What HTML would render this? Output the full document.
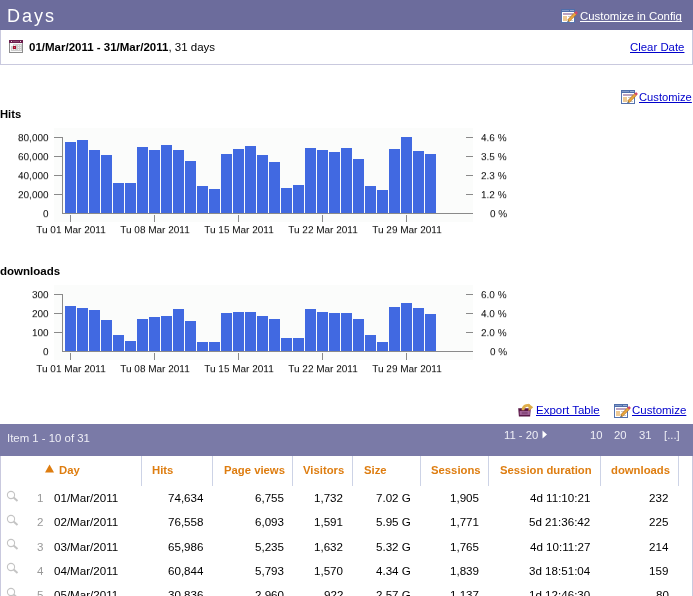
<!DOCTYPE html>
<html><head><meta charset="utf-8"><style>
html,body{margin:0;padding:0;background:#fff;}
body{width:693px;height:596px;overflow:hidden;position:relative;font-family:"Liberation Sans", sans-serif;}
.t{position:absolute;white-space:nowrap;text-decoration-skip-ink:none;-webkit-font-smoothing:antialiased;will-change:transform;}
.cl{color:#000;transform:scaleY(0.88);transform-origin:0 9.465px;}
</style></head><body>
<div style="position:absolute;left:0;top:0;width:693px;height:30px;background:#6c6c9c"></div>
<div class="t " style="left:7px;top:6.76px;font-size:18px;line-height:18px;letter-spacing:2px;color:#fff">Days</div>
<svg width="17" height="15" viewBox="0 0 17 15" style="position:absolute;left:561px;top:9px">
<rect x="0.5" y="0.5" width="13" height="13" fill="#fff" stroke="#5473ae" stroke-width="1"/>
<rect x="0" y="0" width="14" height="3" fill="#4f6eab"/>
<rect x="1" y="1" width="7" height="1" fill="#7f97c6"/>
<rect x="9.5" y="1" width="1" height="1" fill="#e8eef8"/><rect x="11.5" y="1" width="1" height="1" fill="#e8eef8"/>
<rect x="2" y="4" width="10" height="2" fill="#bba3c1"/>
<rect x="2" y="7" width="4" height="5" fill="#edc994"/>
<rect x="7" y="7" width="3" height="1" fill="#c8c8c8"/><rect x="9" y="11" width="3" height="1" fill="#c8c8c8"/>
<path d="M7.4 11.8 L14.6 4.4" stroke="#b9782a" stroke-width="3"/>
<path d="M7.4 11.8 L14.6 4.4" stroke="#eaa940" stroke-width="1.8"/>
<path d="M14.3 4.7 L16 3" stroke="#d4456a" stroke-width="2.6"/>
<path d="M6.2 13.2 L7 11.2 L8.2 12.3 Z" fill="#2a2a2a"/>
</svg>
<div class="t " style="left:579.5px;top:10.85px;font-size:11.4px;line-height:11.4px;color:#fff;text-decoration:underline">Customize in Config</div>
<div style="position:absolute;left:0;top:30px;width:691px;height:34px;border:1px solid #c9c9de;border-top:0"></div>
<svg width="15" height="14" style="position:absolute;left:9px;top:40px">
<rect x="0.5" y="0.5" width="13" height="12" fill="#fafafa" stroke="#8c8c8c"/>
<rect x="0" y="0" width="14" height="3" fill="#6d1f4f"/>
<rect x="4" y="1" width="6" height="1" fill="#8a4a70"/>
<rect x="2" y="1" width="1" height="1" fill="#eadbe3"/><rect x="11" y="1" width="1" height="1" fill="#eadbe3"/>
<rect x="4" y="4" width="9" height="7" fill="#cdcdcd"/><rect x="2" y="6" width="2" height="5" fill="#cdcdcd"/>
<rect x="5" y="5" width="1" height="1" fill="#f0f0f0"/><rect x="9" y="5" width="1" height="1" fill="#f0f0f0"/><rect x="11" y="5" width="1" height="1" fill="#f0f0f0"/>
<rect x="9" y="7" width="1" height="1" fill="#f0f0f0"/><rect x="11" y="7" width="1" height="1" fill="#f0f0f0"/>
<rect x="3" y="9" width="1" height="1" fill="#f0f0f0"/><rect x="5" y="9" width="1" height="1" fill="#f0f0f0"/><rect x="9" y="9" width="1" height="1" fill="#f0f0f0"/><rect x="11" y="9" width="1" height="1" fill="#f0f0f0"/>
<rect x="4" y="6" width="3" height="3" fill="#a5102e"/><rect x="5" y="7" width="1" height="1" fill="#d0607a"/>
</svg>
<div class="t " style="left:29px;top:41.97px;font-size:11.5px;line-height:11.5px;color:#000"><b>01/Mar/2011 - 31/Mar/2011</b>, 31 days</div>
<div class="t " style="left:630px;top:42.15px;font-size:11.4px;line-height:11.4px;color:#0000cc;text-decoration:underline">Clear Date</div>
<svg width="17" height="15" viewBox="0 0 17 15" style="position:absolute;left:621px;top:90px">
<rect x="0.5" y="0.5" width="13" height="13" fill="#fff" stroke="#5473ae" stroke-width="1"/>
<rect x="0" y="0" width="14" height="3" fill="#4f6eab"/>
<rect x="1" y="1" width="7" height="1" fill="#7f97c6"/>
<rect x="9.5" y="1" width="1" height="1" fill="#e8eef8"/><rect x="11.5" y="1" width="1" height="1" fill="#e8eef8"/>
<rect x="2" y="4" width="10" height="2" fill="#bba3c1"/>
<rect x="2" y="7" width="4" height="5" fill="#edc994"/>
<rect x="7" y="7" width="3" height="1" fill="#c8c8c8"/><rect x="9" y="11" width="3" height="1" fill="#c8c8c8"/>
<path d="M7.4 11.8 L14.6 4.4" stroke="#b9782a" stroke-width="3"/>
<path d="M7.4 11.8 L14.6 4.4" stroke="#eaa940" stroke-width="1.8"/>
<path d="M14.3 4.7 L16 3" stroke="#d4456a" stroke-width="2.6"/>
<path d="M6.2 13.2 L7 11.2 L8.2 12.3 Z" fill="#2a2a2a"/>
</svg>
<div class="t " style="left:638.7px;top:91.52px;font-size:11.2px;line-height:11.2px;color:#0000cc;text-decoration:underline">Customize</div>
<div class="t " style="left:0px;top:109.22px;font-size:11.2px;line-height:11.2px;color:#000"><b>Hits</b></div>
<div style="position:absolute;left:54px;top:128px;width:419px;height:94px;background:#fbfcfb"></div>
<svg width="693" height="242" style="position:absolute;left:0;top:0"><rect x="65" y="142" width="11" height="71" fill="#4169e1"/><rect x="77" y="140" width="11" height="73" fill="#4169e1"/><rect x="89" y="150" width="11" height="63" fill="#4169e1"/><rect x="101" y="155" width="11" height="58" fill="#4169e1"/><rect x="113" y="183" width="11" height="30" fill="#4169e1"/><rect x="125" y="183" width="11" height="30" fill="#4169e1"/><rect x="137" y="147" width="11" height="66" fill="#4169e1"/><rect x="149" y="150" width="11" height="63" fill="#4169e1"/><rect x="161" y="145" width="11" height="68" fill="#4169e1"/><rect x="173" y="150" width="11" height="63" fill="#4169e1"/><rect x="185" y="161" width="11" height="52" fill="#4169e1"/><rect x="197" y="186" width="11" height="27" fill="#4169e1"/><rect x="209" y="189" width="11" height="24" fill="#4169e1"/><rect x="221" y="154" width="11" height="59" fill="#4169e1"/><rect x="233" y="149" width="11" height="64" fill="#4169e1"/><rect x="245" y="146" width="11" height="67" fill="#4169e1"/><rect x="257" y="155" width="11" height="58" fill="#4169e1"/><rect x="269" y="162" width="11" height="51" fill="#4169e1"/><rect x="281" y="188" width="11" height="25" fill="#4169e1"/><rect x="293" y="185" width="11" height="28" fill="#4169e1"/><rect x="305" y="148" width="11" height="65" fill="#4169e1"/><rect x="317" y="150" width="11" height="63" fill="#4169e1"/><rect x="329" y="152" width="11" height="61" fill="#4169e1"/><rect x="341" y="148" width="11" height="65" fill="#4169e1"/><rect x="353" y="159" width="11" height="54" fill="#4169e1"/><rect x="365" y="186" width="11" height="27" fill="#4169e1"/><rect x="377" y="190" width="11" height="23" fill="#4169e1"/><rect x="389" y="149" width="11" height="64" fill="#4169e1"/><rect x="401" y="137" width="11" height="76" fill="#4169e1"/><rect x="413" y="151" width="11" height="62" fill="#4169e1"/><rect x="425" y="154" width="11" height="59" fill="#4169e1"/><rect x="62" y="137" width="1" height="77" fill="#8a8a8a"/><rect x="62" y="213" width="411" height="1" fill="#8a8a8a"/><rect x="54" y="137" width="8" height="1" fill="#8a8a8a"/><rect x="466" y="137" width="7" height="1" fill="#8a8a8a"/><rect x="54" y="156" width="8" height="1" fill="#8a8a8a"/><rect x="466" y="156" width="7" height="1" fill="#8a8a8a"/><rect x="54" y="175" width="8" height="1" fill="#8a8a8a"/><rect x="466" y="175" width="7" height="1" fill="#8a8a8a"/><rect x="54" y="194" width="8" height="1" fill="#8a8a8a"/><rect x="466" y="194" width="7" height="1" fill="#8a8a8a"/><rect x="70" y="215" width="1" height="7" fill="#8a8a8a"/><rect x="154" y="215" width="1" height="7" fill="#8a8a8a"/><rect x="238" y="215" width="1" height="7" fill="#8a8a8a"/><rect x="322" y="215" width="1" height="7" fill="#8a8a8a"/><rect x="406" y="215" width="1" height="7" fill="#8a8a8a"/></svg>
<div class="t cl" style="right:644px;top:133.03px;font-size:10px;line-height:10px;text-align:right;">80,000</div>
<div class="t cl" style="right:644px;top:152.03px;font-size:10px;line-height:10px;text-align:right;">60,000</div>
<div class="t cl" style="right:644px;top:171.03px;font-size:10px;line-height:10px;text-align:right;">40,000</div>
<div class="t cl" style="right:644px;top:190.03px;font-size:10px;line-height:10px;text-align:right;">20,000</div>
<div class="t cl" style="right:644px;top:209.03px;font-size:10px;line-height:10px;text-align:right;">0</div>
<div class="t cl" style="right:186px;top:133.03px;font-size:10px;line-height:10px;text-align:right;">4.6 %</div>
<div class="t cl" style="right:186px;top:152.03px;font-size:10px;line-height:10px;text-align:right;">3.5 %</div>
<div class="t cl" style="right:186px;top:171.03px;font-size:10px;line-height:10px;text-align:right;">2.3 %</div>
<div class="t cl" style="right:186px;top:190.03px;font-size:10px;line-height:10px;text-align:right;">1.2 %</div>
<div class="t cl" style="right:186px;top:209.03px;font-size:10px;line-height:10px;text-align:right;">0 %</div>
<div class="t cl" style="left:-29.5px;width:200px;top:225.03px;font-size:10px;line-height:10px;text-align:center;">Tu 01 Mar 2011</div>
<div class="t cl" style="left:54.5px;width:200px;top:225.03px;font-size:10px;line-height:10px;text-align:center;">Tu 08 Mar 2011</div>
<div class="t cl" style="left:138.5px;width:200px;top:225.03px;font-size:10px;line-height:10px;text-align:center;">Tu 15 Mar 2011</div>
<div class="t cl" style="left:222.5px;width:200px;top:225.03px;font-size:10px;line-height:10px;text-align:center;">Tu 22 Mar 2011</div>
<div class="t cl" style="left:306.5px;width:200px;top:225.03px;font-size:10px;line-height:10px;text-align:center;">Tu 29 Mar 2011</div>
<div class="t " style="left:0px;top:265.77px;font-size:11.5px;line-height:11.5px;color:#000"><b>downloads</b></div>
<div style="position:absolute;left:54px;top:285px;width:419px;height:75px;background:#fbfcfb"></div>
<svg width="693" height="380" style="position:absolute;left:0;top:0"><rect x="65" y="306" width="11" height="45" fill="#4169e1"/><rect x="77" y="308" width="11" height="43" fill="#4169e1"/><rect x="89" y="310" width="11" height="41" fill="#4169e1"/><rect x="101" y="320" width="11" height="31" fill="#4169e1"/><rect x="113" y="335" width="11" height="16" fill="#4169e1"/><rect x="125" y="341" width="11" height="10" fill="#4169e1"/><rect x="137" y="319" width="11" height="32" fill="#4169e1"/><rect x="149" y="317" width="11" height="34" fill="#4169e1"/><rect x="161" y="316" width="11" height="35" fill="#4169e1"/><rect x="173" y="309" width="11" height="42" fill="#4169e1"/><rect x="185" y="321" width="11" height="30" fill="#4169e1"/><rect x="197" y="342" width="11" height="9" fill="#4169e1"/><rect x="209" y="342" width="11" height="9" fill="#4169e1"/><rect x="221" y="313" width="11" height="38" fill="#4169e1"/><rect x="233" y="312" width="11" height="39" fill="#4169e1"/><rect x="245" y="312" width="11" height="39" fill="#4169e1"/><rect x="257" y="316" width="11" height="35" fill="#4169e1"/><rect x="269" y="319" width="11" height="32" fill="#4169e1"/><rect x="281" y="338" width="11" height="13" fill="#4169e1"/><rect x="293" y="338" width="11" height="13" fill="#4169e1"/><rect x="305" y="309" width="11" height="42" fill="#4169e1"/><rect x="317" y="312" width="11" height="39" fill="#4169e1"/><rect x="329" y="313" width="11" height="38" fill="#4169e1"/><rect x="341" y="313" width="11" height="38" fill="#4169e1"/><rect x="353" y="319" width="11" height="32" fill="#4169e1"/><rect x="365" y="335" width="11" height="16" fill="#4169e1"/><rect x="377" y="342" width="11" height="9" fill="#4169e1"/><rect x="389" y="307" width="11" height="44" fill="#4169e1"/><rect x="401" y="303" width="11" height="48" fill="#4169e1"/><rect x="413" y="308" width="11" height="43" fill="#4169e1"/><rect x="425" y="314" width="11" height="37" fill="#4169e1"/><rect x="62" y="294" width="1" height="58" fill="#8a8a8a"/><rect x="62" y="351" width="411" height="1" fill="#8a8a8a"/><rect x="54" y="294" width="8" height="1" fill="#8a8a8a"/><rect x="466" y="294" width="7" height="1" fill="#8a8a8a"/><rect x="54" y="313" width="8" height="1" fill="#8a8a8a"/><rect x="466" y="313" width="7" height="1" fill="#8a8a8a"/><rect x="54" y="332" width="8" height="1" fill="#8a8a8a"/><rect x="466" y="332" width="7" height="1" fill="#8a8a8a"/><rect x="70" y="353" width="1" height="7" fill="#8a8a8a"/><rect x="154" y="353" width="1" height="7" fill="#8a8a8a"/><rect x="238" y="353" width="1" height="7" fill="#8a8a8a"/><rect x="322" y="353" width="1" height="7" fill="#8a8a8a"/><rect x="406" y="353" width="1" height="7" fill="#8a8a8a"/></svg>
<div class="t cl" style="right:644px;top:290.04px;font-size:10px;line-height:10px;text-align:right;">300</div>
<div class="t cl" style="right:644px;top:309.04px;font-size:10px;line-height:10px;text-align:right;">200</div>
<div class="t cl" style="right:644px;top:328.04px;font-size:10px;line-height:10px;text-align:right;">100</div>
<div class="t cl" style="right:644px;top:347.04px;font-size:10px;line-height:10px;text-align:right;">0</div>
<div class="t cl" style="right:186px;top:290.04px;font-size:10px;line-height:10px;text-align:right;">6.0 %</div>
<div class="t cl" style="right:186px;top:309.04px;font-size:10px;line-height:10px;text-align:right;">4.0 %</div>
<div class="t cl" style="right:186px;top:328.04px;font-size:10px;line-height:10px;text-align:right;">2.0 %</div>
<div class="t cl" style="right:186px;top:347.04px;font-size:10px;line-height:10px;text-align:right;">0 %</div>
<div class="t cl" style="left:-29.5px;width:200px;top:364.34px;font-size:10px;line-height:10px;text-align:center;">Tu 01 Mar 2011</div>
<div class="t cl" style="left:54.5px;width:200px;top:364.34px;font-size:10px;line-height:10px;text-align:center;">Tu 08 Mar 2011</div>
<div class="t cl" style="left:138.5px;width:200px;top:364.34px;font-size:10px;line-height:10px;text-align:center;">Tu 15 Mar 2011</div>
<div class="t cl" style="left:222.5px;width:200px;top:364.34px;font-size:10px;line-height:10px;text-align:center;">Tu 22 Mar 2011</div>
<div class="t cl" style="left:306.5px;width:200px;top:364.34px;font-size:10px;line-height:10px;text-align:center;">Tu 29 Mar 2011</div>
<svg width="18" height="15" style="position:absolute;left:517px;top:403px">
<path d="M1.2 5.2 H13.8 L13.1 13.6 H1.9 Z" fill="#591747"/>
<rect x="2.7" y="8" width="10.1" height="3.9" fill="#a5659b"/>
<rect x="4.7" y="8.7" width="6" height="2.5" fill="#874a7c"/>
<path d="M6 7.2 C6 3 9.5 1.6 12.6 2.8" fill="none" stroke="#dfae4a" stroke-width="2.8"/>
<path d="M11.3 0.6 L16.2 4.2 L11.6 8.2 Z" fill="#dcaa45"/>
</svg>
<div class="t " style="left:535.5px;top:405.27px;font-size:11.5px;line-height:11.5px;color:#0000cc;text-decoration:underline">Export Table</div>
<svg width="17" height="15" viewBox="0 0 17 15" style="position:absolute;left:614px;top:404px">
<rect x="0.5" y="0.5" width="13" height="13" fill="#fff" stroke="#5473ae" stroke-width="1"/>
<rect x="0" y="0" width="14" height="3" fill="#4f6eab"/>
<rect x="1" y="1" width="7" height="1" fill="#7f97c6"/>
<rect x="9.5" y="1" width="1" height="1" fill="#e8eef8"/><rect x="11.5" y="1" width="1" height="1" fill="#e8eef8"/>
<rect x="2" y="4" width="10" height="2" fill="#bba3c1"/>
<rect x="2" y="7" width="4" height="5" fill="#edc994"/>
<rect x="7" y="7" width="3" height="1" fill="#c8c8c8"/><rect x="9" y="11" width="3" height="1" fill="#c8c8c8"/>
<path d="M7.4 11.8 L14.6 4.4" stroke="#b9782a" stroke-width="3"/>
<path d="M7.4 11.8 L14.6 4.4" stroke="#eaa940" stroke-width="1.8"/>
<path d="M14.3 4.7 L16 3" stroke="#d4456a" stroke-width="2.6"/>
<path d="M6.2 13.2 L7 11.2 L8.2 12.3 Z" fill="#2a2a2a"/>
</svg>
<div class="t " style="left:632px;top:405.27px;font-size:11.5px;line-height:11.5px;color:#0000cc;text-decoration:underline">Customize</div>
<div style="position:absolute;left:0;top:424px;width:693px;height:32px;background:#7a7aa7"></div>
<div class="t " style="left:7px;top:433.35px;font-size:11.4px;line-height:11.4px;color:#eeeef6">Item 1 - 10 of 31</div>
<div class="t " style="left:504px;top:430.43px;font-size:11.3px;line-height:11.3px;color:#eeeef6">11 - 20</div>
<svg width="6" height="10" style="position:absolute;left:542px;top:430px"><path d="M0.5 0.5 L5 4.5 L0.5 8.5 Z" fill="#fff"/></svg>
<div class="t " style="left:590px;top:430.43px;font-size:11.3px;line-height:11.3px;color:#eeeef6">10</div>
<div class="t " style="left:614px;top:430.43px;font-size:11.3px;line-height:11.3px;color:#eeeef6">20</div>
<div class="t " style="left:639px;top:430.43px;font-size:11.3px;line-height:11.3px;color:#eeeef6">31</div>
<div class="t " style="left:664px;top:430.43px;font-size:11.3px;line-height:11.3px;color:#eeeef6">[...]</div>
<div style="position:absolute;left:0;top:456px;width:1px;height:140px;background:#c9c9de"></div>
<div style="position:absolute;left:692px;top:456px;width:1px;height:140px;background:#c9c9de"></div>
<div style="position:absolute;left:141px;top:456px;width:1px;height:30px;background:#cdd3e6"></div>
<div style="position:absolute;left:212px;top:456px;width:1px;height:30px;background:#cdd3e6"></div>
<div style="position:absolute;left:292px;top:456px;width:1px;height:30px;background:#cdd3e6"></div>
<div style="position:absolute;left:352px;top:456px;width:1px;height:30px;background:#cdd3e6"></div>
<div style="position:absolute;left:420px;top:456px;width:1px;height:30px;background:#cdd3e6"></div>
<div style="position:absolute;left:488px;top:456px;width:1px;height:30px;background:#cdd3e6"></div>
<div style="position:absolute;left:600px;top:456px;width:1px;height:30px;background:#cdd3e6"></div>
<div style="position:absolute;left:678px;top:456px;width:1px;height:30px;background:#cdd3e6"></div>
<div class="t " style="left:58.5px;top:465.43px;font-size:11.3px;line-height:11.3px;color:#de7d10;font-weight:bold">Day</div>
<div class="t " style="left:152.4px;top:465.43px;font-size:11.3px;line-height:11.3px;color:#de7d10;font-weight:bold">Hits</div>
<div class="t " style="left:223.5px;top:465.43px;font-size:11.3px;line-height:11.3px;color:#de7d10;font-weight:bold">Page views</div>
<div class="t " style="left:303.2px;top:465.43px;font-size:11.3px;line-height:11.3px;color:#de7d10;font-weight:bold">Visitors</div>
<div class="t " style="left:363.5px;top:465.43px;font-size:11.3px;line-height:11.3px;color:#de7d10;font-weight:bold">Size</div>
<div class="t " style="left:431.2px;top:465.43px;font-size:11.3px;line-height:11.3px;color:#de7d10;font-weight:bold">Sessions</div>
<div class="t " style="left:499.8px;top:465.43px;font-size:11.3px;line-height:11.3px;color:#de7d10;font-weight:bold">Session duration</div>
<div class="t " style="left:610.9px;top:465.43px;font-size:11.3px;line-height:11.3px;color:#de7d10;font-weight:bold">downloads</div>
<svg width="10" height="10" style="position:absolute;left:45px;top:464px"><path d="M4.5 0.6 L9 8.6 H0 Z" fill="#de7d10"/></svg>
<svg width="14" height="14" style="position:absolute;left:6px;top:489.5px"><circle cx="5" cy="5" r="3.6" fill="none" stroke="#c4c4c4" stroke-width="1.1"/><path d="M7.6 7.6 L11.5 11" stroke="#c4c4c4" stroke-width="2"/></svg>
<div class="t " style="right:649.5px;top:492.18px;font-size:11.6px;line-height:11.6px;text-align:right;color:#999">1</div>
<div class="t " style="left:54px;top:492.18px;font-size:11.6px;line-height:11.6px;color:#000">01/Mar/2011</div>
<div class="t " style="right:489.6px;top:492.18px;font-size:11.6px;line-height:11.6px;text-align:right;color:#000">74,634</div>
<div class="t " style="right:409.09999999999997px;top:492.18px;font-size:11.6px;line-height:11.6px;text-align:right;color:#000">6,755</div>
<div class="t " style="right:349.5px;top:492.18px;font-size:11.6px;line-height:11.6px;text-align:right;color:#000">1,732</div>
<div class="t " style="right:282.0px;top:492.18px;font-size:11.6px;line-height:11.6px;text-align:right;color:#000">7.02 G</div>
<div class="t " style="right:213.59999999999997px;top:492.18px;font-size:11.6px;line-height:11.6px;text-align:right;color:#000">1,905</div>
<div class="t " style="right:102.5px;top:492.18px;font-size:11.6px;line-height:11.6px;text-align:right;color:#000">4d 11:10:21</div>
<div class="t " style="right:24.200000000000045px;top:492.18px;font-size:11.6px;line-height:11.6px;text-align:right;color:#000">232</div>
<svg width="14" height="14" style="position:absolute;left:6px;top:513.5px"><circle cx="5" cy="5" r="3.6" fill="none" stroke="#c4c4c4" stroke-width="1.1"/><path d="M7.6 7.6 L11.5 11" stroke="#c4c4c4" stroke-width="2"/></svg>
<div class="t " style="right:649.5px;top:516.18px;font-size:11.6px;line-height:11.6px;text-align:right;color:#999">2</div>
<div class="t " style="left:54px;top:516.18px;font-size:11.6px;line-height:11.6px;color:#000">02/Mar/2011</div>
<div class="t " style="right:489.6px;top:516.18px;font-size:11.6px;line-height:11.6px;text-align:right;color:#000">76,558</div>
<div class="t " style="right:409.09999999999997px;top:516.18px;font-size:11.6px;line-height:11.6px;text-align:right;color:#000">6,093</div>
<div class="t " style="right:349.5px;top:516.18px;font-size:11.6px;line-height:11.6px;text-align:right;color:#000">1,591</div>
<div class="t " style="right:282.0px;top:516.18px;font-size:11.6px;line-height:11.6px;text-align:right;color:#000">5.95 G</div>
<div class="t " style="right:213.59999999999997px;top:516.18px;font-size:11.6px;line-height:11.6px;text-align:right;color:#000">1,771</div>
<div class="t " style="right:102.5px;top:516.18px;font-size:11.6px;line-height:11.6px;text-align:right;color:#000">5d 21:36:42</div>
<div class="t " style="right:24.200000000000045px;top:516.18px;font-size:11.6px;line-height:11.6px;text-align:right;color:#000">225</div>
<svg width="14" height="14" style="position:absolute;left:6px;top:537.9px"><circle cx="5" cy="5" r="3.6" fill="none" stroke="#c4c4c4" stroke-width="1.1"/><path d="M7.6 7.6 L11.5 11" stroke="#c4c4c4" stroke-width="2"/></svg>
<div class="t " style="right:649.5px;top:540.58px;font-size:11.6px;line-height:11.6px;text-align:right;color:#999">3</div>
<div class="t " style="left:54px;top:540.58px;font-size:11.6px;line-height:11.6px;color:#000">03/Mar/2011</div>
<div class="t " style="right:489.6px;top:540.58px;font-size:11.6px;line-height:11.6px;text-align:right;color:#000">65,986</div>
<div class="t " style="right:409.09999999999997px;top:540.58px;font-size:11.6px;line-height:11.6px;text-align:right;color:#000">5,235</div>
<div class="t " style="right:349.5px;top:540.58px;font-size:11.6px;line-height:11.6px;text-align:right;color:#000">1,632</div>
<div class="t " style="right:282.0px;top:540.58px;font-size:11.6px;line-height:11.6px;text-align:right;color:#000">5.32 G</div>
<div class="t " style="right:213.59999999999997px;top:540.58px;font-size:11.6px;line-height:11.6px;text-align:right;color:#000">1,765</div>
<div class="t " style="right:102.5px;top:540.58px;font-size:11.6px;line-height:11.6px;text-align:right;color:#000">4d 10:11:27</div>
<div class="t " style="right:24.200000000000045px;top:540.58px;font-size:11.6px;line-height:11.6px;text-align:right;color:#000">214</div>
<svg width="14" height="14" style="position:absolute;left:6px;top:562.3px"><circle cx="5" cy="5" r="3.6" fill="none" stroke="#c4c4c4" stroke-width="1.1"/><path d="M7.6 7.6 L11.5 11" stroke="#c4c4c4" stroke-width="2"/></svg>
<div class="t " style="right:649.5px;top:564.98px;font-size:11.6px;line-height:11.6px;text-align:right;color:#999">4</div>
<div class="t " style="left:54px;top:564.98px;font-size:11.6px;line-height:11.6px;color:#000">04/Mar/2011</div>
<div class="t " style="right:489.6px;top:564.98px;font-size:11.6px;line-height:11.6px;text-align:right;color:#000">60,844</div>
<div class="t " style="right:409.09999999999997px;top:564.98px;font-size:11.6px;line-height:11.6px;text-align:right;color:#000">5,793</div>
<div class="t " style="right:349.5px;top:564.98px;font-size:11.6px;line-height:11.6px;text-align:right;color:#000">1,570</div>
<div class="t " style="right:282.0px;top:564.98px;font-size:11.6px;line-height:11.6px;text-align:right;color:#000">4.34 G</div>
<div class="t " style="right:213.59999999999997px;top:564.98px;font-size:11.6px;line-height:11.6px;text-align:right;color:#000">1,839</div>
<div class="t " style="right:102.5px;top:564.98px;font-size:11.6px;line-height:11.6px;text-align:right;color:#000">3d 18:51:04</div>
<div class="t " style="right:24.200000000000045px;top:564.98px;font-size:11.6px;line-height:11.6px;text-align:right;color:#000">159</div>
<svg width="14" height="14" style="position:absolute;left:6px;top:586.7px"><circle cx="5" cy="5" r="3.6" fill="none" stroke="#c4c4c4" stroke-width="1.1"/><path d="M7.6 7.6 L11.5 11" stroke="#c4c4c4" stroke-width="2"/></svg>
<div class="t " style="right:649.5px;top:589.38px;font-size:11.6px;line-height:11.6px;text-align:right;color:#999">5</div>
<div class="t " style="left:54px;top:589.38px;font-size:11.6px;line-height:11.6px;color:#000">05/Mar/2011</div>
<div class="t " style="right:489.6px;top:589.38px;font-size:11.6px;line-height:11.6px;text-align:right;color:#000">30,836</div>
<div class="t " style="right:409.09999999999997px;top:589.38px;font-size:11.6px;line-height:11.6px;text-align:right;color:#000">2,960</div>
<div class="t " style="right:349.5px;top:589.38px;font-size:11.6px;line-height:11.6px;text-align:right;color:#000">922</div>
<div class="t " style="right:282.0px;top:589.38px;font-size:11.6px;line-height:11.6px;text-align:right;color:#000">2.57 G</div>
<div class="t " style="right:213.59999999999997px;top:589.38px;font-size:11.6px;line-height:11.6px;text-align:right;color:#000">1,137</div>
<div class="t " style="right:102.5px;top:589.38px;font-size:11.6px;line-height:11.6px;text-align:right;color:#000">1d 12:46:30</div>
<div class="t " style="right:24.200000000000045px;top:589.38px;font-size:11.6px;line-height:11.6px;text-align:right;color:#000">80</div>
</body></html>
